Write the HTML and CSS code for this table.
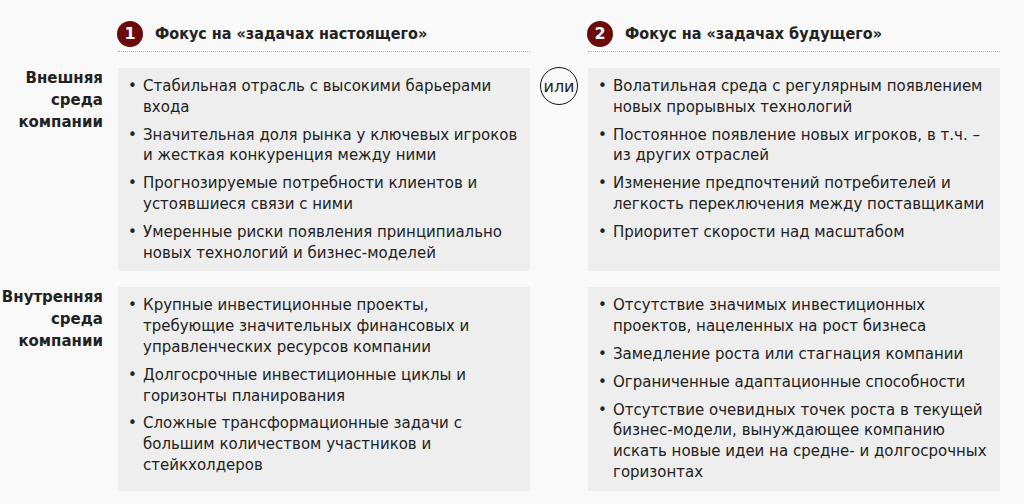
FILE: index.html
```html
<!DOCTYPE html>
<html lang="ru">
<head>
<meta charset="utf-8">
<link rel="stylesheet" href="styles.css">
</head>
<body>
<div class="grid">
  <div class="corner"></div>
  <div class="head"><span class="num">1</span><span class="title">Фокус на «задачах настоящего»</span></div>
  <div class="mid"></div>
  <div class="head"><span class="num">2</span><span class="title">Фокус на «задачах будущего»</span></div>

  <div class="label">Внешняя<br>среда<br>компании</div>
  <ul class="panel">
    <li>Стабильная отрасль с высокими барьерами входа</li>
    <li>Значительная доля рынка у ключевых игроков и жесткая конкуренция между ними</li>
    <li>Прогнозируемые потребности клиентов и устоявшиеся связи с ними</li>
    <li>Умеренные риски появления принципиально новых технологий и бизнес-моделей</li>
  </ul>
  <div class="mid"><span class="or">или</span></div>
  <ul class="panel">
    <li>Волатильная среда с регулярным появлением новых прорывных технологий</li>
    <li>Постоянное появление новых игроков, в т.ч. – из других отраслей</li>
    <li>Изменение предпочтений потребителей и легкость переключения между поставщиками</li>
    <li>Приоритет скорости над масштабом</li>
  </ul>

  <div class="label">Внутренняя<br>среда<br>компании</div>
  <ul class="panel">
    <li>Крупные инвестиционные проекты, требующие значительных финансовых и управленческих ресурсов компании</li>
    <li>Долгосрочные инвестиционные циклы и горизонты планирования</li>
    <li>Сложные трансформационные задачи с большим количеством участников и стейкхолдеров</li>
  </ul>
  <div class="mid"></div>
  <ul class="panel">
    <li>Отсутствие значимых инвестиционных проектов, нацеленных на рост бизнеса</li>
    <li>Замедление роста или стагнация компании</li>
    <li>Ограниченные адаптационные способности</li>
    <li>Отсутствие очевидных точек роста в текущей бизнес-модели, вынуждающее компанию искать новые идеи на средне- и долгосрочных горизонтах</li>
  </ul>
</div>
</body>
</html>
```

FILE: styles.css
```css
html, body {
  margin: 0;
  padding: 0;
}
body {
  background: #f9f9f9;
  font-family: "DejaVu Sans", Verdana, sans-serif;
  color: #222222;
  width: 1024px;
  height: 504px;
  overflow: hidden;
}
.grid {
  display: grid;
  grid-template-columns: 118px 412px 58px 412px;
  grid-template-rows: 52px auto auto;
  row-gap: 16px;
}
.head {
  display: flex;
  align-items: center;
  gap: 12px;
  border-bottom: 1px dotted #b5b5b5;
  height: 52px;
  box-sizing: border-box;
}
.num {
  width: 26px;
  height: 26px;
  border-radius: 50%;
  background: #6b0a0a;
  color: #fff;
  font-weight: bold;
  font-size: 16px;
  display: flex;
  align-items: center;
  justify-content: center;
  margin-top: 16px;
  margin-left: -1px;
}
.title {
  font-family: "DejaVu Sans Condensed", "DejaVu Sans", sans-serif;
  font-weight: bold;
  font-size: 16px;
  margin-top: 16px;
}
.label {
  text-align: right;
  font-weight: bold;
  font-size: 15px;
  line-height: 22px;
  padding-right: 15px;
  margin-top: -1px;
}
.panel {
  list-style: none;
  margin: 0;
  background: #eeeeee;
  padding: 8px 10px 8px 25px;
  font-size: 15px;
  line-height: 20.8px;
}
.panel li {
  position: relative;
  margin-bottom: 7px;
}
.panel li:last-child { margin-bottom: 0; }
.panel li::before {
  content: "•";
  position: absolute;
  left: -15px;
  top: 0;
}
.mid {
  display: flex;
  justify-content: center;
}
.or {
  width: 36px;
  height: 36px;
  border: 1.5px solid #111;
  border-radius: 50%;
  display: flex;
  align-items: center;
  justify-content: center;
  font-size: 16px;
  margin-top: -1px;
}
```
